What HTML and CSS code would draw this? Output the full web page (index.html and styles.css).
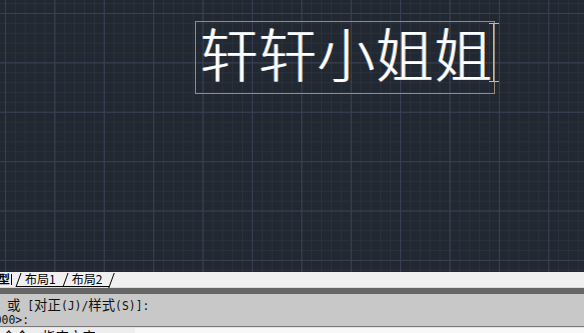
FILE: index.html
```html
<!DOCTYPE html>
<html lang="zh-CN">
<head>
<meta charset="utf-8">
<meta name="viewport" content="width=device-width, initial-scale=1.0">
<title>Drawing1</title>
<link rel="stylesheet" href="styles.css">
</head>
<body>
<div class="app">
  <!-- model space, the text object being edited -->
  <div class="canvas">
    <div class="mtext">
      <span class="mtext-str">轩轩小姐姐</span>
      <span class="ibeam"></span>
    </div>
  </div>

  <div class="tabs">
    <span class="tab active">模型</span>
    <span class="tab">布局1</span>
    <span class="tab">布局2</span>
    <span class="tab end"></span>
  </div>

  <div class="cmd-bar"></div>
  <div class="cmd">
    <div class="cmd-line"><span class="cj">或</span> [<span class="cj">对正</span>(J)/<span class="cj">样式</span>(S)]:</div>
    <div class="cmd-line cut">&lt;0000&gt;:</div>
  </div>
  <div class="cmd-input">
    <div class="cmd-input-text"><span class="cj">命令</span>: <span class="cj">指定文字</span></div>
    <div class="cmd-input-box"></div>
  </div>
</div>
</body>
</html>
```

FILE: styles.css
```css
html, body {
  margin: 0;
  padding: 0;
  background: #f0f0f0;
}
.app {
  width: 584px;
  height: 333px;
  overflow: hidden;
  display: flex;
  flex-direction: column;
}

/* drawing area with the grid */
.canvas {
  height: 272px;
  flex: none;
  box-sizing: border-box;
  padding: 21px 0 0 195px;
  background-color: #222831;
  background-image:
    linear-gradient(to right, #3a4054 1px, transparent 1px),
    linear-gradient(to bottom, #3a4054 1px, transparent 1px),
    linear-gradient(to right, #2b313c 1px, transparent 1px),
    linear-gradient(to bottom, #2b313c 1px, transparent 1px);
  background-size: 49.4px 100%, 100% 49.4px, 9.88px 100%, 100% 9.88px;
  background-position: 5px 0, 0 13px, 5px 0, 0 13px;
}
.mtext {
  position: relative;
  width: 298px;
  height: 71px;
  border: 1px solid #9a8a78;
}
.mtext-str {
  display: block;
  padding: 0 0 0 4px;
  font-family: "Noto Sans CJK SC", sans-serif;
  font-weight: 300;
  font-size: 58px;
  line-height: 60px;
  color: #ffffff;
  letter-spacing: 0.5px;
  white-space: nowrap;
  text-shadow: -1px 0 #3f8fe0, 1px 0 #e0a060;
}
.ibeam {
  position: absolute;
  left: 293px;
  top: 1px;
  width: 10px;
  height: 57px;
  border-top: 1px solid #b8b8b8;
  border-bottom: 1px solid #b8b8b8;
}
.ibeam::after {
  content: "";
  position: absolute;
  left: 4px;
  top: 0;
  bottom: 0;
  border-left: 1px solid #b8b8b8;
}

/* layout tabs */
.tabs {
  height: 15px;
  flex: none;
  display: flex;
  align-items: stretch;
  background: #f0f0f0;
  border-bottom: 1px solid #dcdcdc;
  font-family: "Noto Sans CJK SC", sans-serif;
  font-size: 12px;
  line-height: 14px;
  color: #000;
}
.tab {
  position: relative;
  padding: 0 7px 0 9px;
  border-bottom: 1px solid #000;
}
.tab::before {
  content: "";
  position: absolute;
  left: 2px;
  top: 1px;
  bottom: -1px;
  border-left: 1px solid #000;
  transform: skewX(-20deg);
}
.tab.active {
  margin-left: -14px;
  padding: 0 6px 0 0;
  border-bottom: none;
  font-weight: 700;
}
.tab.active::before {
  display: none;
}
.tab.active::after {
  content: "";
  position: absolute;
  right: 4px;
  top: 2px;
  bottom: 2px;
  border-left: 1px solid #000;
}
.tab.end {
  padding: 0;
  border-bottom: none;
}

/* command window */
.cmd-bar {
  height: 6px;
  flex: none;
  background: #666666;
}
.cmd {
  height: 33px;
  flex: none;
  box-sizing: border-box;
  padding: 3px 0 0 7px;
  background: #c8c8c8;
  border-bottom: 1px solid #7a7a7a;
  font-family: "DejaVu Sans Mono", monospace;
  font-size: 11.4px;
  line-height: 14px;
  color: #111;
}
.cmd-line {
  white-space: nowrap;
}
.cmd-line.cut {
  margin-left: -26px;
}
.cj {
  font-family: "Noto Sans CJK SC", sans-serif;
  font-size: 13.4px;
}
.cmd-input {
  flex: 1;
  display: flex;
  background: #eeeeee;
  border-top: 1px solid #e4e4e4;
  overflow: hidden;
}
.cmd-input-text {
  width: 133px;
  margin-top: 1px;
  padding-left: 2px;
  font-family: "DejaVu Sans Mono", monospace;
  font-size: 11.2px;
  line-height: 14px;
  color: #000;
  white-space: nowrap;
}
.cmd-input-box {
  flex: 1;
  background: #f8f8f8;
}
```
